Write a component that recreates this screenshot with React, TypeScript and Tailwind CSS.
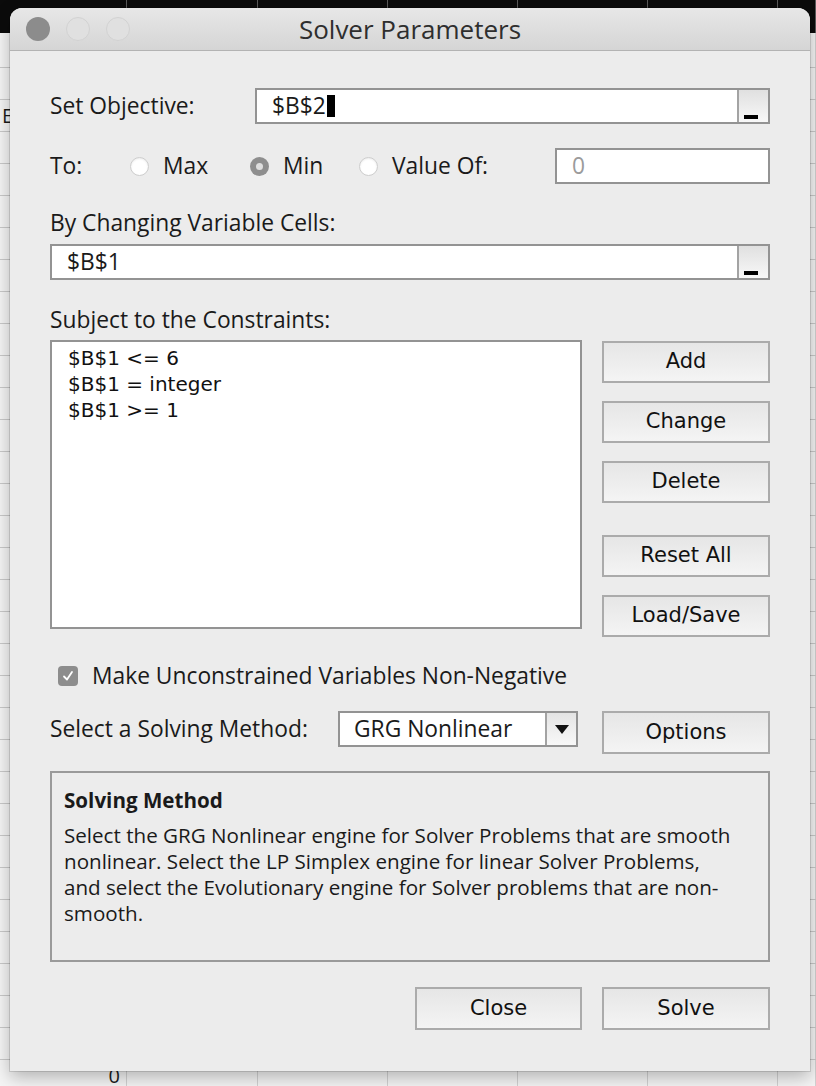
import React from 'react';

// spreadsheet columns peeking out behind the dialog
const colWidths = [127, 131, 130, 130, 130, 130, 38];

const Radio = ({ checked }: { checked?: boolean }) =>
  checked ? (
    <span className="flex h-[19px] w-[19px] items-center justify-center rounded-full bg-[#8e8e8e]">
      <span className="h-[7px] w-[7px] rounded-full bg-[#dedede]" />
    </span>
  ) : (
    <span className="h-[19px] w-[19px] rounded-full border border-[#cdcdcd] bg-white shadow-[inset_0_1px_2px_rgba(0,0,0,0.08)]" />
  );

const PickerButton = () => (
  <div className="flex w-[31px] flex-col items-start justify-end border-l-2 border-[#a3a3a3] bg-linear-to-b from-[#e0e0e0] to-[#f8f8f8] pb-[3px] pl-[5px]">
    <div className="h-[4px] w-[14px] bg-black" />
  </div>
);

const RefInput = ({ value, cursor }: { value: string; cursor?: boolean }) => (
  <div className="flex h-[36px] flex-1 border-2 border-[#939393] bg-white">
    <div className="flex flex-1 items-center pl-[15px]">
      <span>{value}</span>
      {cursor && <span className="ml-[1px] h-[22px] w-[8px] bg-black" />}
    </div>
    <PickerButton />
  </div>
);

const Btn = ({ children, className = '' }: { children: React.ReactNode; className?: string }) => (
  <div
    className={`flex items-center justify-center border-2 border-[#ababab] bg-linear-to-b from-[#e6e6e6] to-[#f4f4f4] font-['DejaVu_Sans',sans-serif] text-[21px] text-[#111] ${className}`}
  >
    {children}
  </div>
);

export default function App() {
  return (
    <div className="relative h-[1086px] w-[816px] overflow-hidden bg-[#f5f5f5] font-['Open_Sans',sans-serif] text-[22.8px] text-[#1a1a1a]">
      {/* sheet behind */}
      <div className="flex h-[33px] bg-[#0b0b0b]">
        {colWidths.map((w, i) => (
          <div key={i} style={{ width: w }} className="shrink-0 border-r border-[#5a5a5a]" />
        ))}
      </div>
      {Array.from({ length: 33 }).map((_, r) => (
        <div key={r} className={`flex border-b border-[#c9c9c9] ${r === 0 ? 'h-[35px]' : 'h-[32px]'}`}>
          {colWidths.map((w, i) => (
            <div
              key={i}
              style={{ width: w }}
              className={`flex shrink-0 items-center border-r border-[#d2d2d2] text-[20px] ${
                i === 0 ? 'justify-between pl-[2px] pr-[6px]' : ''
              }`}
            >
              {i === 0 && r === 2 && <span>E</span>}
              {i === 0 && r === 32 && <span className="ml-auto">0</span>}
            </div>
          ))}
        </div>
      ))}

      {/* dialog window */}
      <div className="absolute left-[10px] top-[8px] flex h-[1063px] w-[800px] flex-col rounded-t-[12px] bg-[#ececec] shadow-[0_0_0_1px_rgba(0,0,0,0.12),0_6px_18px_rgba(0,0,0,0.28)]">
        <div className="grid h-[43px] grid-cols-[1fr_auto_1fr] items-center rounded-t-[12px] border-b border-[#b3b3b3] bg-linear-to-b from-[#e7e7e7] to-[#d5d5d5] px-[16px]">
          <div className="flex gap-[16px]">
            <span className="h-[24px] w-[24px] rounded-full bg-[#8c8c8c]" />
            <span className="h-[24px] w-[24px] rounded-full border border-[#d2d2d2] bg-[#e0e0e0]" />
            <span className="h-[24px] w-[24px] rounded-full border border-[#d2d2d2] bg-[#e0e0e0]" />
          </div>
          <div className="text-[26px] leading-[30px] text-[#2e2e2e]">Solver Parameters</div>
          <div />
        </div>

        <div className="flex flex-col px-[40px] pt-[37px]">
          <div className="flex h-[36px] items-center">
            <span className="w-[205px]">Set Objective:</span>
            <RefInput value="$B$2" cursor />
          </div>

          <div className="mt-[24px] flex h-[36px] items-center">
            <span className="w-[80px]">To:</span>
            <div className="flex w-[120px] items-center gap-[14px]">
              <Radio />
              <span>Max</span>
            </div>
            <div className="flex w-[109px] items-center gap-[14px]">
              <Radio checked />
              <span>Min</span>
            </div>
            <div className="flex items-center gap-[14px]">
              <Radio />
              <span>Value Of:</span>
            </div>
            <div className="ml-auto flex h-full w-[215px] items-center border-2 border-[#939393] bg-white pl-[15px] text-[#9b9b9b]">
              0
            </div>
          </div>

          <div className="mt-[24px] leading-[30px]">By Changing Variable Cells:</div>
          <div className="mt-[6px] flex">
            <RefInput value="$B$1" />
          </div>

          <div className="mt-[25px] leading-[30px]">Subject to the Constraints:</div>
          <div className="mt-[5px] flex">
            <div className="h-[289px] w-[532px] border-2 border-[#939393] bg-white pl-[16px] pt-[3px] font-['DejaVu_Sans',sans-serif] text-[20px] leading-[26px] text-[#111]">
              <div>$B$1 &lt;= 6</div>
              <div>$B$1 = integer</div>
              <div>$B$1 &gt;= 1</div>
            </div>
            <div className="ml-auto mt-[1px] flex w-[168px] flex-col">
              <Btn className="h-[42px]">Add</Btn>
              <Btn className="mt-[18px] h-[42px]">Change</Btn>
              <Btn className="mt-[18px] h-[42px]">Delete</Btn>
              <Btn className="mt-[32px] h-[42px]">Reset All</Btn>
              <Btn className="mt-[18px] h-[42px]">Load/Save</Btn>
            </div>
          </div>

          <div className="mt-[29px] flex h-[20px] items-center pl-[8px]">
            <span className="flex h-[20px] w-[20px] items-center justify-center rounded-[4px] bg-[#8d8d8d]">
              <svg width="12" height="12" viewBox="0 0 12 12" fill="none">
                <path d="M2 6.5 L5 9.5 L10 2" stroke="white" strokeWidth="1.8" strokeLinecap="round" strokeLinejoin="round" />
              </svg>
            </span>
            <span className="ml-[14px] leading-[20px]">Make Unconstrained Variables Non-Negative</span>
          </div>

          <div className="mt-[25px] flex items-start">
            <span className="flex h-[36px] w-[288px] items-center">Select a Solving Method:</span>
            <div className="flex h-[36px] w-[240px] border-2 border-[#939393] bg-white">
              <span className="flex flex-1 items-center pl-[14px]">GRG Nonlinear</span>
              <div className="flex w-[31px] items-center justify-center border-l-2 border-[#a3a3a3] bg-linear-to-b from-[#e4e4e4] to-[#f8f8f8]">
                <svg width="14" height="9" viewBox="0 0 14 9">
                  <path d="M0 0 H14 L7 9 Z" fill="#111" />
                </svg>
              </div>
            </div>
            <Btn className="ml-auto h-[43px] w-[168px]">Options</Btn>
          </div>

          <div className="mt-[17px] h-[191px] border-2 border-[#9a9a9a] pl-[12px] pr-[30px] pt-[14px] text-[20.6px] leading-[26px]">
            <div className="font-bold">Solving Method</div>
            <p className="mt-[9px]">
              Select the GRG Nonlinear engine for Solver Problems that are smooth nonlinear. Select the LP Simplex
              engine for linear Solver Problems, and select the Evolutionary engine for Solver problems that are
              non-smooth.
            </p>
          </div>

          <div className="mt-[25px] flex justify-end gap-[20px]">
            <Btn className="h-[43px] w-[167px]">Close</Btn>
            <Btn className="h-[43px] w-[168px]">Solve</Btn>
          </div>
        </div>
      </div>
    </div>
  );
}
